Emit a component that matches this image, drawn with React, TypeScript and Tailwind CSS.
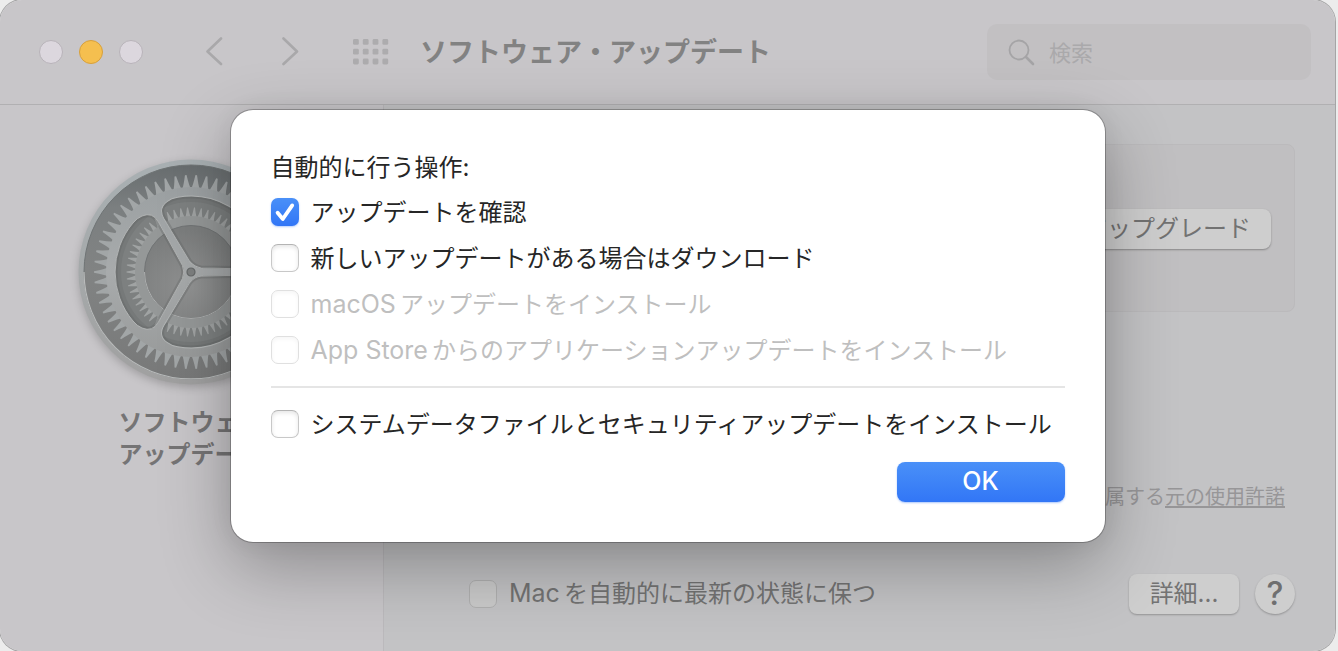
import React, { useState } from 'react';

// Props for the sheet checkbox rows
interface CheckRowProps {
  id: string;
  label: React.ReactNode;
  checked?: boolean;
  disabled?: boolean;
  onChange?: (checked: boolean) => void;
}

// Checkbox with a label, used in the sheet
const CheckRow: React.FC<CheckRowProps> = ({ id, label, checked = false, disabled = false, onChange }) => {
  return (
    <div className="flex h-7 items-center gap-3">
      <span className="relative flex h-7 w-7 shrink-0">
        <input
          id={id}
          type="checkbox"
          checked={checked}
          disabled={disabled}
          onChange={(e) => onChange?.(e.target.checked)}
          className="h-7 w-7 appearance-none rounded-[7px] border border-[#c8c8c8] border-t-[#b4b4b4] bg-white shadow-[inset_0_2px_4px_rgba(0,0,0,0.1)] checked:border-0 checked:bg-linear-to-b checked:from-[#4a90f8] checked:to-[#3276f6] checked:shadow-[0_1px_2px_rgba(50,118,246,0.35)] disabled:border-[#e0e0e0] disabled:shadow-[inset_0_2px_4px_rgba(0,0,0,0.04)]"
        />
        {checked && (
          <svg viewBox="0 0 28 28" className="pointer-events-none absolute inset-0 h-7 w-7" fill="none" stroke="white" strokeWidth="3.8" strokeLinecap="round" strokeLinejoin="round">
            <path d="M6.6 14.8L11.8 21L21.2 7.4" />
          </svg>
        )}
      </span>
      <label htmlFor={id} className={disabled ? 'pt-0.5 whitespace-nowrap text-[#bfbfbf]' : 'pt-0.5 whitespace-nowrap text-[#262626]'}>
        {label}
      </label>
    </div>
  );
};

// Number of teeth on both gears
const TEETH = 58;
const teeth = Array.from({ length: TEETH }, (_, i) => (i * 360) / TEETH);

// One opening between two spokes, pointing left
const OPENING =
  'M-8.5 -6.5L-32.5 -50Q-38.5 -60.5 -49 -56Q-54 -54 -58 -49A76 76 0 0 0 -58 49Q-54 54 -49 56Q-38.5 60.5 -32.5 50L-8.5 6.5Q-6 0 -8.5 -6.5Z';

// System preferences gear
const GearIcon: React.FC = () => {
  return (
    <svg viewBox="-114 -114 228 228" className="mr-[2px] h-[228px] w-[228px] drop-shadow-[0_3px_4px_rgba(0,0,0,0.2)]" aria-hidden="true">
      <defs>
        <linearGradient id="rim" x1="0" y1="0" x2="0" y2="1">
          <stop offset="0" stopColor="#a9b0b3" />
          <stop offset="0.5" stopColor="#a5a9aa" />
          <stop offset="1" stopColor="#a0a0a0" />
        </linearGradient>
        <linearGradient id="well" x1="0" y1="0" x2="0" y2="1">
          <stop offset="0" stopColor="#686d6f" />
          <stop offset="0.2" stopColor="#7b7f80" />
          <stop offset="0.5" stopColor="#818383" />
          <stop offset="1" stopColor="#787979" />
        </linearGradient>
        <linearGradient id="metal" x1="0" y1="-97" x2="0" y2="97" gradientUnits="userSpaceOnUse">
          <stop offset="0" stopColor="#9a9fa1" />
          <stop offset="0.5" stopColor="#a8abac" />
          <stop offset="1" stopColor="#979999" />
        </linearGradient>
        <radialGradient id="inner" cx="0.5" cy="0.65" r="0.6">
          <stop offset="0" stopColor="#929393" />
          <stop offset="1" stopColor="#7c7e7e" />
        </radialGradient>
        <clipPath id="openings">
          <path d={OPENING} />
          <path d={OPENING} transform="rotate(120)" />
          <path d={OPENING} transform="rotate(240)" />
        </clipPath>
      </defs>
      {/* Rim and the well behind the teeth */}
      <circle r="112.5" fill="url(#rim)" />
      <circle r="107" fill="url(#well)" stroke="#6f7475" strokeWidth="1" />
      <path d="M-107 0A107 107 0 0 0 107 0" fill="none" stroke="#b9bbbb" strokeWidth="1.2" />
      {/* Outer gear */}
      {teeth.map((a) => (
        <path key={a} d="M-83 -4.4Q-86 -2.8 -97 -0.8L-97 0.8Q-86 2.8 -83 4.4Z" fill="#a2a6a7" transform={`rotate(${a})`} />
      ))}
      <circle r="85" fill="url(#metal)" />
      {/* Inner gear seen through the openings */}
      <g clipPath="url(#openings)">
        <circle r="78" fill="#767979" />
        <circle r="70" fill="#7d8080" />
        {teeth.map((a) => (
          <path key={a} d="M-55 -2.6Q-58 -1.5 -64.5 -0.5L-64.5 0.5Q-58 1.5 -55 2.6Z" fill="#a0a3a3" transform={`rotate(${a})`} />
        ))}
        <circle r="56" fill="#959898" />
        <circle r="46.5" fill="url(#inner)" stroke="#717475" strokeWidth="1" />
        <path d="M-46.5 0A46.5 46.5 0 0 0 46.5 0" fill="none" stroke="#aeb0b0" strokeWidth="1" />
        {/* Shade under the edge of each opening */}
        <g fill="none" stroke="#606364" strokeOpacity="0.35" strokeWidth="5">
          <path d={OPENING} />
          <path d={OPENING} transform="rotate(120)" />
          <path d={OPENING} transform="rotate(240)" />
        </g>
      </g>
      {/* Bevel on the spokes */}
      <g fill="none" stroke="#b5b8b8" strokeWidth="0.9">
        <path d={OPENING} />
        <path d={OPENING} transform="rotate(120)" />
        <path d={OPENING} transform="rotate(240)" />
      </g>
      <circle r="4" fill="#7e8080" stroke="#666969" strokeWidth="1.2" />
    </svg>
  );
};

// Window title bar with navigation and search
const TitleBar: React.FC = () => {
  return (
    <header className="flex h-[105px] items-center border-b border-[#b1b0b2] bg-[#c8c6c9] pr-6 pl-[39px]">
      {/* Window buttons */}
      <div className="flex gap-4">
        <button aria-label="閉じる" className="h-6 w-6 rounded-full border border-[#b8b3b9] bg-[#dcd7de]" />
        <button aria-label="しまう" className="h-6 w-6 rounded-full border border-[#d7a03c] bg-[#f5bf4f]" />
        <button aria-label="拡大" className="h-6 w-6 rounded-full border border-[#b8b3b9] bg-[#dcd7de]" />
      </div>

      {/* Navigation */}
      <div className="ml-[61px] flex items-center gap-[56px]">
        <button aria-label="戻る" className="h-[30px] w-5">
          <svg viewBox="0 0 20 30" className="h-[30px] w-5" fill="none" stroke="#a9a8aa" strokeWidth="2.6" strokeLinecap="round" strokeLinejoin="round">
            <path d="M17 1.5L3.5 14.5L17 27" />
          </svg>
        </button>
        <button aria-label="進む" className="h-[30px] w-5">
          <svg viewBox="0 0 20 30" className="h-[30px] w-5" fill="none" stroke="#a9a8aa" strokeWidth="2.6" strokeLinecap="round" strokeLinejoin="round">
            <path d="M3.5 1.5L17 14.5L3.5 27" />
          </svg>
        </button>
      </div>
      <button aria-label="すべてを表示" className="ml-[53px]">
        <svg viewBox="0 0 36 26" className="h-[26px] w-9" fill="#adacae">
          {[0, 9.8, 19.6].map((y) =>
            [0, 9.8, 19.6, 29.4].map((x) => <rect key={`${x}-${y}`} x={x} y={y} width="5.8" height="5.8" rx="1.4" />)
          )}
        </svg>
      </button>

      <h1 className="ml-[31px] pt-0.5 text-[27px] leading-10 font-bold whitespace-nowrap text-[#828282]">ソフトウェア・アップデート</h1>

      {/* Search field */}
      <div className="ml-auto flex h-14 w-[324px] items-center gap-[14px] rounded-[10px] bg-[#c2c0c2] pl-[21px]">
        <svg viewBox="0 0 27 27" className="h-[27px] w-[27px] shrink-0" fill="none" stroke="#a5a4a6" strokeLinecap="round">
          <circle cx="11" cy="11" r="9.5" strokeWidth="1.8" />
          <path d="M18 18L25 25" strokeWidth="2.6" />
        </svg>
        <input type="search" aria-label="検索" placeholder="検索" className="w-full min-w-0 bg-transparent pt-0.5 text-[22px] outline-none placeholder:text-[#aaa9ab]" />
      </div>
    </header>
  );
};

// Dimmed settings page behind the sheet
const SettingsPage: React.FC = () => {
  return (
    <div className="flex flex-1">
      <aside className="flex w-[384px] shrink-0 flex-col items-center border-r border-[#bbb9bc] bg-[#c8c6c9] pt-[53px]">
        <GearIcon />
        <p className="mt-[21px] mr-[2px] text-center text-2xl leading-8 font-bold text-[#757475]">
          ソフトウェア
          <br />
          アップデート
        </p>
      </aside>

      <main className="flex flex-1 flex-col bg-[#c3c3c5] px-10 pt-[39px] pb-[37px]">
        <section className="flex justify-end rounded-lg border border-[#bbbabc] bg-[#c0bfc1] px-[23px] pt-16 pb-[62px]">
          <button className="h-10 rounded-lg bg-[#cecece] px-5 text-2xl leading-8 whitespace-nowrap text-[#727272] shadow-[0_1px_2px_rgba(0,0,0,0.3)]">
            アップグレード
          </button>
        </section>

        <p className="mt-auto mr-[10px] text-right text-xl leading-8 text-[#979698]">
          付属する
          <a href="#license" className="underline underline-offset-2">元の使用許諾</a>
        </p>

        <div className="mt-[61px] flex items-center pl-[45px]">
          <input id="keep-updated" type="checkbox" disabled className="h-7 w-7 shrink-0 appearance-none rounded-[7px] border border-[#b0b0b0] bg-[#cacaca]" />
          <label htmlFor="keep-updated" className="ml-3 text-2xl whitespace-nowrap text-[#737373]">
            <span className="mr-1 text-[25px]">Mac</span>を自動的に最新の状態に保つ
          </label>
          <button className="ml-auto h-10 w-[110px] rounded-lg bg-[#cecece] text-2xl leading-8 text-[#737373] shadow-[0_1px_2px_rgba(0,0,0,0.25)]">詳細...</button>
          <button aria-label="ヘルプ" className="ml-4 h-10 w-10 rounded-full bg-[#cecece] text-[32px] leading-10 font-medium text-[#6f6f70] shadow-[0_1px_2px_rgba(0,0,0,0.25)]">?</button>
        </div>
      </main>
    </div>
  );
};

// Sheet with the automatic update options
const UpdateSheet: React.FC = () => {
  const [check, setCheck] = useState(true);
  const [download, setDownload] = useState(false);
  const [system, setSystem] = useState(false);

  return (
    <div role="dialog" aria-labelledby="sheet-title" className="w-full max-w-[874px] rounded-[22px] bg-white p-10 text-2xl shadow-[0_0_0_1px_rgba(0,0,0,0.25),0_0_24px_rgba(0,0,0,0.06),0_24px_70px_rgba(0,0,0,0.3)]">
      <h2 id="sheet-title" className="mb-3 leading-9 text-[#262626]">自動的に行う操作:</h2>
      <div className="flex flex-col gap-[18px]">
        <CheckRow id="check" label="アップデートを確認" checked={check} onChange={setCheck} />
        <CheckRow id="download" label="新しいアップデートがある場合はダウンロード" checked={download} onChange={setDownload} />
        <CheckRow id="macos" label={<><span className="mr-1 text-[25px]">macOS</span>アップデートをインストール</>} disabled />
        <CheckRow id="appstore" label={<><span className="mr-1 text-[25px]">App Store</span>からのアプリケーションアップデートをインストール</>} disabled />
      </div>
      <hr className="my-[22px] border-t-2 border-[#e5e5e5]" />
      <CheckRow id="system" label="システムデータファイルとセキュリティアップデートをインストール" checked={system} onChange={setSystem} />
      <div className="mt-6 flex justify-end">
        <button className="h-10 w-[168px] rounded-lg bg-linear-to-b from-[#4a90f8] to-[#3276f6] pb-0.5 text-[25px] leading-9 font-medium text-white shadow-[0_1px_2px_rgba(50,118,246,0.4)]">OK</button>
      </div>
    </div>
  );
};

const App: React.FC = () => {
  return (
    <div className="min-h-screen bg-[#ececec] pr-[3px] font-['Inter','Noto_Sans_CJK_JP',sans-serif]">
      <div className="relative flex min-h-screen flex-col overflow-hidden rounded-[22px] shadow-[0_0_0_1px_#a5a5a6]">
        <TitleBar />
        <SettingsPage />
        {/* Sheet lies over the dimmed window */}
        <div className="absolute inset-0 flex items-start justify-center pt-[110px]">
          <UpdateSheet />
        </div>
      </div>
    </div>
  );
};

export default App;
